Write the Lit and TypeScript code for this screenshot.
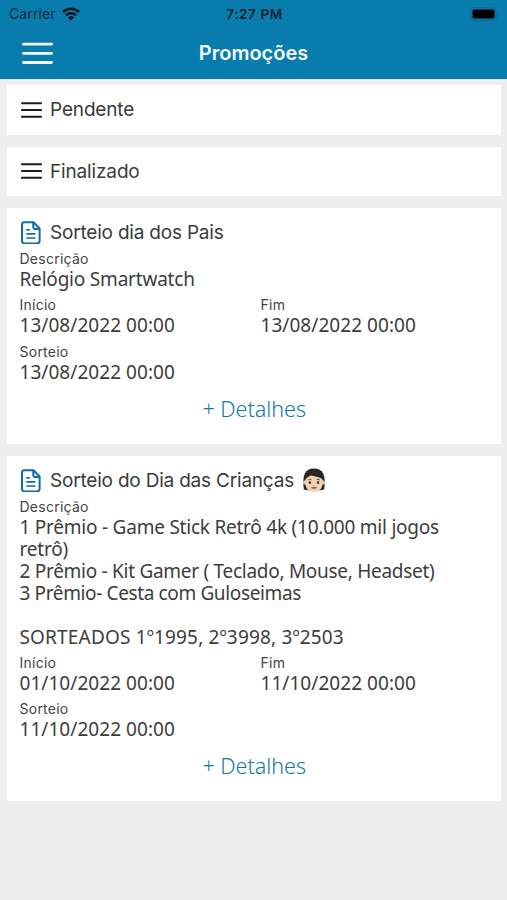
import { LitElement, html, css, svg, nothing } from "lit";
import { customElement, property } from "lit/decorators.js";

interface Line {
  text: string;
  tone?: string;
}

interface Promotion {
  title: string;
  child?: boolean;
  description: Line[];
  start: string;
  end: string;
  draw: string;
}

const promotions: Promotion[] = [
  {
    title: "Sorteio dia dos Pais",
    description: [{ text: "Relógio Smartwatch" }],
    start: "13/08/2022 00:00",
    end: "13/08/2022 00:00",
    draw: "13/08/2022 00:00",
  },
  {
    title: "Sorteio do Dia das Crianças",
    child: true,
    description: [
      { text: "1 Prêmio - Game Stick Retrô 4k (10.000 mil jogos", tone: "tight" },
      { text: "retrô)" },
      { text: "2 Prêmio - Kit Gamer ( Teclado, Mouse, Headset)", tone: "tighter" },
      { text: "3 Prêmio- Cesta com Guloseimas", tone: "tightest" },
      { text: "" },
      { text: "SORTEADOS 1º1995, 2º3998, 3º2503", tone: "caps" },
    ],
    start: "01/10/2022 00:00",
    end: "11/10/2022 00:00",
    draw: "11/10/2022 00:00",
  },
];

const bars = svg`<path d="M1 2.2h19M1 9h19M1 15.8h19" stroke="#1c1c1c" stroke-width="2.1" stroke-linecap="round"/>`;

@customElement("status-bar")
export class StatusBar extends LitElement {
  static styles = css`
    :host {
      display: grid;
      grid-template-columns: 1fr auto 1fr;
      align-items: center;
      height: 28px;
      padding: 0 7px 0 9px;
      font: 14px/28px Inter, "Liberation Sans", sans-serif;
      color: #0b2a38;
    }
    .left { display: flex; align-items: center; gap: 6px; height: 26px; }
    .time { font-weight: 600; font-size: 13.5px; letter-spacing: 0.6px; color: #06212e; }
    .right { display: flex; justify-content: flex-end; height: 15px; }
    .carrier { letter-spacing: 0.1px; }
    svg { display: block; }
  `;
  render() {
    return html`
      <div class="left">
        <span class="carrier">Carrier</span>
        <svg width="18" height="14" viewBox="0 0 18 14" fill="none" stroke="#05141b" stroke-width="2.5">
          <path d="M.9 5.2a11.5 11.5 0 0 1 16.2 0M3.9 8.4a7.2 7.2 0 0 1 10.2 0" />
          <path d="M9 13.6 5.9 10.6a4.4 4.4 0 0 1 6.2 0z" fill="#05141b" stroke="none" />
        </svg>
      </div>
      <span class="time">7:27 PM</span>
      <div class="right">
        <svg width="30" height="14" viewBox="0 0 30 14">
          <rect x=".6" y=".6" width="25.5" height="12.8" rx="3.5" fill="none" stroke="#076b97" stroke-width="1.2" />
          <rect x="2.5" y="2.5" width="22" height="9" rx="1.6" fill="#000" />
          <path d="M27.6 4.8q2 2.2 0 4.4z" fill="#075d82" />
        </svg>
      </div>
    `;
  }
}

@customElement("promo-card")
export class PromoCard extends LitElement {
  @property({ attribute: false }) promo!: Promotion;

  static styles = css`
    :host {
      display: block;
      box-sizing: border-box;
      padding: 12px 12px 22px 12.5px;
      background: #fff;
      color: #3c3c3c;
    }
    .head { display: flex; align-items: center; height: 24px; padding-left: 1.5px; margin-bottom: 6px; }
    .title { margin: 2px 0 0 9px; font: 19px/24px Inter, "Liberation Sans", sans-serif; letter-spacing: -0.2px; color: #3a3a3a; white-space: pre; }
    .child { margin: 0 0 0 8px; }
    svg { display: block; flex: none; }
    .label { font: 14px/18px Inter, "Liberation Sans", sans-serif; letter-spacing: 0.25px; color: #454545; }
    .value { font: 400 19px/22px "Noto Sans", sans-serif; letter-spacing: -0.2px; white-space: pre; min-height: 22px; }
    .date { letter-spacing: 0.05px; }
    .tight { letter-spacing: -0.23px; }
    .tighter { letter-spacing: -0.28px; }
    .tightest { letter-spacing: -0.37px; }
    .caps { letter-spacing: 0.17px; }
    .fields { display: grid; grid-template-columns: 241px 1fr; row-gap: 6.4px; margin-top: 6px; }
    .more { margin-top: 13px; font: 300 21.5px/26px "Noto Sans", sans-serif; color: #1079a8; text-align: center; }
  `;

  private field(label: string, value: string) {
    return html`<div><div class="label">${label}</div><div class="value date">${value}</div></div>`;
  }

  render() {
    const p = this.promo;
    return html`
      <div class="head">
        <svg width="20" height="24" viewBox="0 0 20 24" fill="none" stroke="#0f6ca8" stroke-width="2" stroke-linejoin="round" stroke-linecap="round">
          <path d="M3.400 2.200h9.100L18.600 8.500V21a2.400 2.400 0 0 1-2.400 2.400H3.400A2.400 2.400 0 0 1 1 21V4.600A2.400 2.400 0 0 1 3.400 2.200z" />
          <path d="M12.300 2.700v4.400a1.800 1.800 0 0 0 1.800 1.800H18.400" />
          <path d="M6 9.800h2.200M6 13.800h7.800M6 18h7.800" stroke-width="1.700" />
        </svg>
        <span class="title">${p.title}</span>
        ${p.child
          ? html`<svg class="child" width="24" height="26" viewBox="0 0 24 26">
              <path d="M1.800 22.500C0 8 3 1.500 12 1.500S24 8 22.200 22.500l-4 .8H5.800z" fill="#292624" />
              <circle cx="2.800" cy="15.500" r="1.900" fill="#eac3a0" />
              <circle cx="21.200" cy="15.500" r="1.900" fill="#eac3a0" />
              <path d="M3.200 13C5 10.500 7 9 9.500 8.500c4 1.500 9 1 11.300 4.500.8 7-2.800 12-8.800 12S2.400 20 3.200 13z" fill="#f3d3b5" />
              <path d="M6 13q1.700-1.300 3.400-.3M14.600 12.700q1.700-1 3.400.3" fill="none" stroke="#5b4032" stroke-width=".9" />
              <ellipse cx="7.900" cy="15.600" rx="1.200" ry="1.500" fill="#49301f" />
              <ellipse cx="16.100" cy="15.600" rx="1.200" ry="1.500" fill="#49301f" />
              <path d="M11 18.300q1 .7 2 0" fill="none" stroke="#d19a75" stroke-width=".8" />
              <path d="M9.400 20.600q2.600 2 5.200 0z" fill="#b4524b" stroke="#8f4a3c" stroke-width=".7" />
            </svg>`
          : nothing}
      </div>
      <div class="label">Descrição</div>
      ${p.description.map((l) => html`<div class="value ${l.tone ?? ""}">${l.text}</div>`)}
      <div class="fields">
        ${this.field("Início", p.start)} ${this.field("Fim", p.end)} ${this.field("Sorteio", p.draw)}
      </div>
      <div class="more">+ Detalhes</div>
    `;
  }
}

@customElement("app-root")
export class AppRoot extends LitElement {
  static styles = css`
    :host { display: block; min-height: 900px; background: #eee; overflow: hidden; }
    header { background: #097cae; height: 79px; border-bottom: 1px solid #d3eef5; }
    .nav { display: grid; grid-template-columns: 1fr auto 1fr; align-items: center; height: 50px; padding: 0 22px; }
    h1 { margin: 0; font: 600 20px/28px Inter, "Liberation Sans", sans-serif; color: #f4fbff; }
    svg { display: block; flex: none; }
    main { display: flex; flex-direction: column; gap: 12px; padding: 5px 6px 0 7px; }
    .filter { display: flex; align-items: center; height: 49.6px; box-sizing: border-box; padding-left: 14px; gap: 8px; background: #fff; font: 19px/24px Inter, "Liberation Sans", sans-serif; letter-spacing: -0.15px; color: #3a3a3a; }
    .filter span { margin-top: 1px; }
  `;
  render() {
    return html`
      <header>
        <status-bar></status-bar>
        <div class="nav">
          <svg width="31" height="23" viewBox="0 0 31 23">
            <path d="M1.500 2.200h28M1.500 11.400h28M1.500 20.500h28" stroke="#f4fbff" stroke-width="2.800" stroke-linecap="round" />
          </svg>
          <h1>Promoções</h1>
        </div>
      </header>
      <main>
        ${["Pendente", "Finalizado"].map(
          (name) => html`<div class="filter"><svg width="21" height="18" viewBox="0 0 21 18">${bars}</svg><span>${name}</span></div>`
        )}
        ${promotions.map((p) => html`<promo-card .promo=${p}></promo-card>`)}
      </main>
    `;
  }
}
